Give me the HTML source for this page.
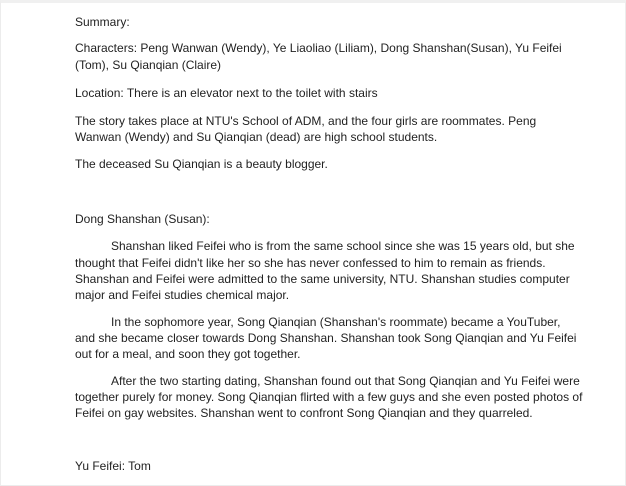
<html><head><style>
body{margin:0;width:626px;height:484px;background:#fff;overflow:hidden;position:relative;font-family:"Liberation Sans",Arial,sans-serif;font-size:12px;color:#222}
.f{position:absolute;left:0;top:0;width:624px;height:482px;border:1px solid #ececec;border-top:3px solid #f0f0f0}
div.l{position:absolute;left:75px;white-space:nowrap;line-height:14px}
.i{left:111px!important}
</style></head><body><div class="f"></div>
<div class="l" style="top:15px">Summary:</div>
<div class="l" style="top:41px">Characters: Peng Wanwan (Wendy), Ye Liaoliao (Liliam), Dong Shanshan(Susan), Yu Feifei</div>
<div class="l" style="top:58px">(Tom), Su Qianqian (Claire)</div>
<div class="l" style="top:86px">Location: There is an elevator next to the toilet with stairs</div>
<div class="l" style="top:114px">The story takes place at NTU's School of ADM, and the four girls are roommates. Peng</div>
<div class="l" style="top:130px">Wanwan (Wendy) and Su Qianqian (dead) are high school students.</div>
<div class="l" style="top:157px">The deceased Su Qianqian is a beauty blogger.</div>
<div class="l" style="top:212px">Dong Shanshan (Susan):</div>
<div class="l i" style="top:239px">Shanshan liked Feifei who is from the same school since she was 15 years old, but she</div>
<div class="l" style="top:256px">thought that Feifei didn't like her so she has never confessed to him to remain as friends.</div>
<div class="l" style="top:272px">Shanshan and Feifei were admitted to the same university, NTU. Shanshan studies computer</div>
<div class="l" style="top:288px">major and Feifei studies chemical major.</div>
<div class="l i" style="top:315px">In the sophomore year, Song Qianqian (Shanshan's roommate) became a YouTuber,</div>
<div class="l" style="top:331px">and she became closer towards Dong Shanshan. Shanshan took Song Qianqian and Yu Feifei</div>
<div class="l" style="top:347px">out for a meal, and soon they got together.</div>
<div class="l i" style="top:374px">After the two starting dating, Shanshan found out that Song Qianqian and Yu Feifei were</div>
<div class="l" style="top:390px">together purely for money. Song Qianqian flirted with a few guys and she even posted photos of</div>
<div class="l" style="top:406px">Feifei on gay websites. Shanshan went to confront Song Qianqian and they quarreled.</div>
<div class="l" style="top:459px">Yu Feifei: Tom</div>
</body></html>
